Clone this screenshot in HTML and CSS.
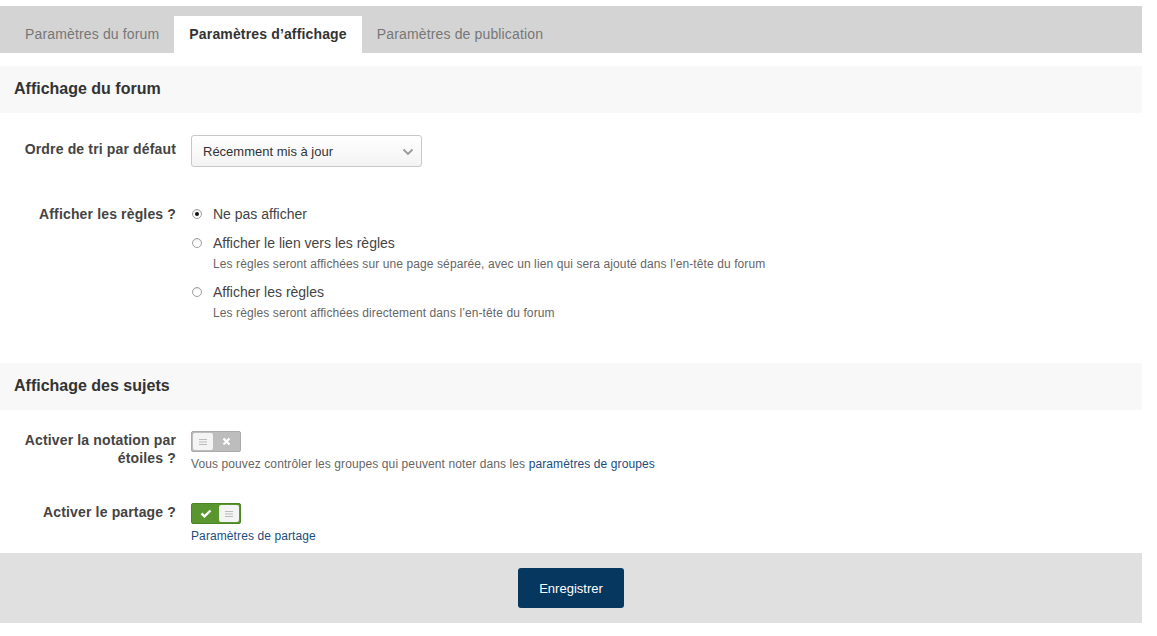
FILE: index.html
```html
<!DOCTYPE html>
<html lang="fr">
<head>
    <meta charset="UTF-8">
    <title>Paramètres d'affichage</title>
    <link rel="stylesheet" href="styles.css">
</head>
<body>
    <div class="page">
        <div class="tabs">
            <div class="tab">Paramètres du forum</div>
            <div class="tab active">Paramètres d’affichage</div>
            <div class="tab">Paramètres de publication</div>
        </div>

        <div class="section">
            <h2 class="section-title">Affichage du forum</h2>
            <div class="section-body first">
                <div class="row">
                    <label class="row-label pad">Ordre de tri par défaut</label>
                    <div class="row-field">
                        <div class="select">
                            <span>Récemment mis à jour</span>
                            <svg class="chevron" width="12" height="8" viewBox="0 0 12 8"><path d="M1.5 1.5 L6 6 L10.5 1.5" fill="none" stroke="#999" stroke-width="1.8"/></svg>
                        </div>
                    </div>
                </div>

                <div class="row rules">
                    <label class="row-label">Afficher les règles ?</label>
                    <div class="row-field">
                        <div class="option">
                            <div class="option-title"><span class="radio checked"></span>Ne pas afficher</div>
                        </div>
                        <div class="option">
                            <div class="option-title"><span class="radio"></span>Afficher le lien vers les règles</div>
                            <div class="help">Les règles seront affichées sur une page séparée, avec un lien qui sera ajouté dans l’en-tête du forum</div>
                        </div>
                        <div class="option">
                            <div class="option-title"><span class="radio"></span>Afficher les règles</div>
                            <div class="help">Les règles seront affichées directement dans l’en-tête du forum</div>
                        </div>
                    </div>
                </div>
            </div>
        </div>

        <div class="section">
            <h2 class="section-title">Affichage des sujets</h2>
            <div class="section-body second">
                <div class="row">
                    <label class="row-label tight">Activer la notation par étoiles ?</label>
                    <div class="row-field">
                        <span class="toggle off">
                            <span class="knob"><svg width="10" height="8" viewBox="0 0 10 8"><path d="M1 1.5H9M1 4H9M1 6.5H9" stroke="#bbb" stroke-width="1"/></svg></span>
                            <span class="side"><svg width="9" height="9" viewBox="0 0 9 9"><path d="M1.5 1.5L7.5 7.5M7.5 1.5L1.5 7.5" stroke="#fff" stroke-width="2.2"/></svg></span>
                        </span>
                        <div class="help">Vous pouvez contrôler les groupes qui peuvent noter dans les <a href="#">paramètres de groupes</a></div>
                    </div>
                </div>

                <div class="row share">
                    <label class="row-label tight">Activer le partage ?</label>
                    <div class="row-field">
                        <span class="toggle on">
                            <span class="side"><svg width="12" height="9" viewBox="0 0 12 9"><path d="M1.5 4.5L4.5 7.3L10.5 1.5" fill="none" stroke="#fff" stroke-width="2.4"/></svg></span>
                            <span class="knob"><svg width="10" height="8" viewBox="0 0 10 8"><path d="M1 1.5H9M1 4H9M1 6.5H9" stroke="#bbb" stroke-width="1"/></svg></span>
                        </span>
                        <div class="help"><a href="#">Paramètres de partage</a></div>
                    </div>
                </div>
            </div>
        </div>

        <div class="footer">
            <button class="save-btn">Enregistrer</button>
        </div>
    </div>
</body>
</html>
```

FILE: styles.css
```css
* {
    margin: 0;
    padding: 0;
    box-sizing: border-box;
}

body {
    font-family: 'Liberation Sans', Arial, sans-serif;
    background: #fff;
    color: #444;
}

.page {
    width: 1142px;
    padding-top: 6px;
}

/* tabs */
.tabs {
    display: flex;
    background: #d4d4d4;
    padding: 10px 0 0 10px;
    margin-bottom: 13px;
}

.tab {
    height: 37px;
    line-height: 36px;
    padding: 0 15px;
    font-size: 14px;
    letter-spacing: 0.15px;
    color: #777;
}

.tab.active {
    background: #fff;
    color: #333;
    font-weight: bold;
}

/* sections */
.section-title {
    background: #f8f8f8;
    height: 47px;
    line-height: 46px;
    padding-left: 14px;
    font-size: 16px;
    color: #333;
}

.section-body.first {
    padding: 22px 0 39px;
}

.section-body.second {
    padding: 21px 0 8px;
}

.row {
    display: flex;
}

.row.rules {
    margin-top: 37px;
}

.row.share {
    margin-top: 30px;
}

.row-label {
    width: 176px;
    flex-shrink: 0;
    text-align: right;
    font-size: 14px;
    font-weight: bold;
    line-height: 20px;
    letter-spacing: 0.15px;
    color: #444;
    margin-right: 15px;
}

.row-label.pad {
    padding-top: 4px;
}

.row-label.tight {
    line-height: 18px;
}

/* select */
.select {
    width: 231px;
    height: 32px;
    border: 1px solid #c8c8c8;
    border-radius: 3px;
    background: linear-gradient(#fff, #f3f3f3);
    display: flex;
    align-items: center;
    justify-content: space-between;
    padding: 0 7px 0 11px;
    font-size: 13px;
    color: #333;
}

.chevron {
    margin-top: 1px;
}

/* radio options */
.option + .option {
    margin-top: 9px;
}

.option-title {
    display: flex;
    align-items: center;
    font-size: 14px;
    line-height: 20px;
    color: #444;
}

.radio {
    width: 10px;
    height: 10px;
    border: 1px solid #a0a0a0;
    border-radius: 50%;
    margin: 0 11px 0 1px;
    background: #fff;
    position: relative;
    box-shadow: inset 0 1px 1px rgba(0, 0, 0, 0.12);
}

.radio.checked::after {
    content: "";
    position: absolute;
    left: 2px;
    top: 2px;
    width: 4px;
    height: 4px;
    border-radius: 50%;
    background: #111;
}

.help {
    font-size: 12px;
    line-height: 18px;
    letter-spacing: 0.1px;
    color: #666;
    margin-top: 3px;
}

.option .help {
    padding-left: 22px;
    margin: 2px 0 2px;
}

.help a {
    color: #1b4d7e;
    text-decoration: none;
}

/* toggles */
.toggle {
    display: flex;
    width: 50px;
    height: 21px;
    border-radius: 2px;
    padding: 1px;
}

.toggle.off {
    background: #bdbdbd;
    border: 1px solid #aaa;
}

.toggle.on {
    background: #5a9630;
    border: 1px solid #4b8526;
}

.knob {
    width: 20px;
    height: 17px;
    background: #f4f4f4;
    border-radius: 2px;
    display: flex;
    align-items: center;
    justify-content: center;
}

.side {
    flex: 1;
    display: flex;
    align-items: center;
    justify-content: center;
}

/* footer */
.footer {
    background: #e0e0e0;
    padding: 15px 0;
    text-align: center;
}

.save-btn {
    background: #05375f;
    color: #fff;
    border: none;
    border-radius: 3px;
    height: 40px;
    padding: 0 21px;
    font-family: 'Liberation Sans', Arial, sans-serif;
    font-size: 13px;
    cursor: pointer;
}
```
